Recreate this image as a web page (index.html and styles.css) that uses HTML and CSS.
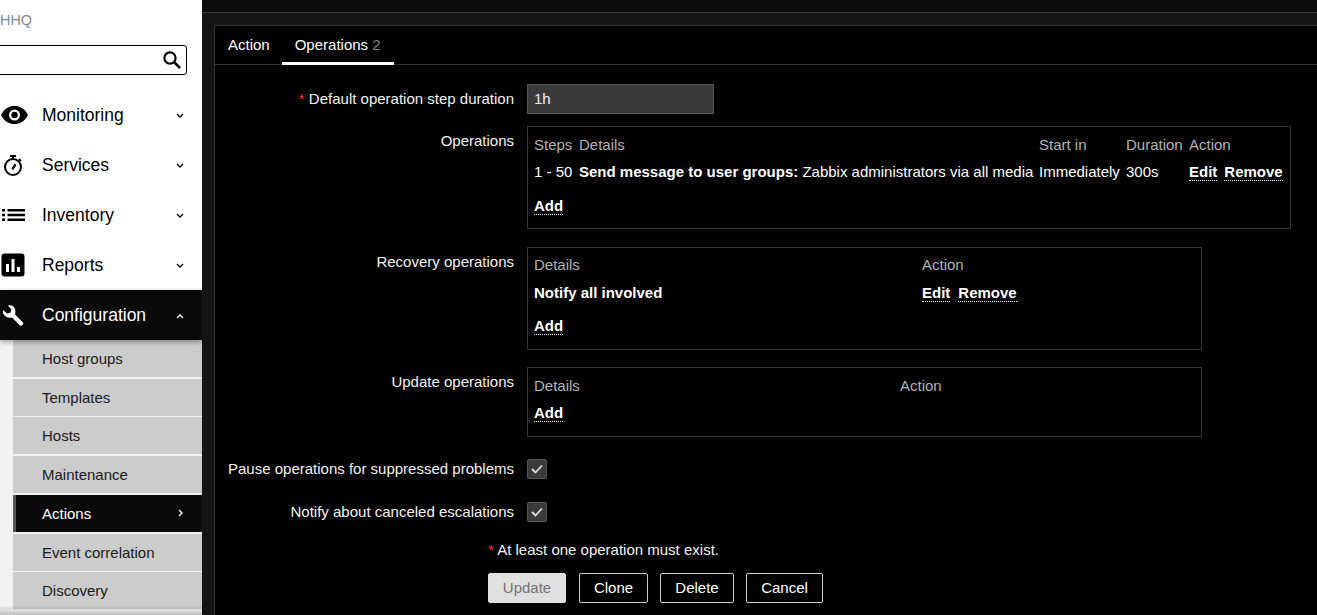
FILE: index.html
```html
<!DOCTYPE html>
<html lang="en">
<head>
<meta charset="utf-8">
<title>Zabbix action</title>
<link rel="stylesheet" href="styles.css">
</head>
<body>
<div class="page">
  <aside class="sidebar">
    <div class="brand">HHQ</div>
    <div class="search">
      <svg class="search-icon" viewBox="0 0 20 20" width="20" height="20"><circle cx="8" cy="8" r="5.6" fill="none" stroke="#000" stroke-width="2.2"/><path d="M12 12l6 6" stroke="#000" stroke-width="2.6"/></svg>
    </div>
    <nav class="nav">
      <a class="nav-item">
        <span class="nav-icon"><svg viewBox="0 0 28 20" width="28" height="20"><path d="M0 10C3.500 3.500 8 1 13.500 1S23.500 3.500 27 10c-3.500 6.500-8 9-13.500 9S3.500 16.500 0 10z" fill="#000"/><circle cx="13.500" cy="10" r="5.500" fill="#fff"/><circle cx="13.500" cy="10" r="3.200" fill="#000"/></svg></span>
        <span class="nav-label">Monitoring</span>
        <svg class="chev" viewBox="0 0 8 6" width="8" height="6"><path d="M1 1l3 3 3-3" fill="none" stroke="#000" stroke-width="1.300"/></svg>
      </a>
      <a class="nav-item">
        <span class="nav-icon"><svg viewBox="0 0 24 24" width="24" height="24"><circle cx="12" cy="14" r="8" fill="none" stroke="#000" stroke-width="2"/><path d="M9 3h6" stroke="#000" stroke-width="2"/><path d="M12 3v3M18 6l2 2" stroke="#000" stroke-width="1.800"/><path d="M11 15.500l3-4.500 1 1-3 4.500z" fill="#000" stroke="#000"/></svg></span>
        <span class="nav-label">Services</span>
        <svg class="chev" viewBox="0 0 8 6" width="8" height="6"><path d="M1 1l3 3 3-3" fill="none" stroke="#000" stroke-width="1.300"/></svg>
      </a>
      <a class="nav-item">
        <span class="nav-icon"><svg viewBox="0 0 24 14" width="24" height="14"><path d="M1 1h3v2.400H1zM1 5.800h3v2.400H1zM1 10.600h3V13H1zM6.500 1H24v2.400H6.500zM6.500 5.800H24v2.400H6.500zM6.500 10.600H24V13H6.500z" fill="#000"/></svg></span>
        <span class="nav-label">Inventory</span>
        <svg class="chev" viewBox="0 0 8 6" width="8" height="6"><path d="M1 1l3 3 3-3" fill="none" stroke="#000" stroke-width="1.300"/></svg>
      </a>
      <a class="nav-item">
        <span class="nav-icon"><svg viewBox="0 0 24 24" width="24" height="24"><rect width="23" height="23" x="0.500" y="0.500" rx="3" fill="#000"/><path d="M5 11h3v8H5zM10.500 6h3v13h-3zM16 14h3v5h-3z" fill="#fff"/></svg></span>
        <span class="nav-label">Reports</span>
        <svg class="chev" viewBox="0 0 8 6" width="8" height="6"><path d="M1 1l3 3 3-3" fill="none" stroke="#000" stroke-width="1.300"/></svg>
      </a>
      <a class="nav-item nav-item-open">
        <span class="nav-icon nav-icon-wrench"><svg viewBox="0 0 24 24" width="24" height="24"><path d="M15 11.500L22.500 19a2 2 0 0 1-3 3L12 14.500c-3.500 1-7-.5-8.500-3.500-.6-1.300-.8-2.800-.5-4l4 3.500 3.500-.8.800-3.500L8 2.500c1.500-.5 3-.3 4.300.3 3 1.500 3.700 5.200 2.700 8.700z" fill="#fff"/></svg></span>
        <span class="nav-label">Configuration</span>
        <svg class="chev" viewBox="0 0 8 6" width="8" height="6"><path d="M1 5l3-3 3 3" fill="none" stroke="#fff" stroke-width="1.300"/></svg>
      </a>
      <ul class="subnav">
        <li class="subnav-item">Host groups</li>
        <li class="subnav-item">Templates</li>
        <li class="subnav-item">Hosts</li>
        <li class="subnav-item">Maintenance</li>
        <li class="subnav-item subnav-active">Actions
          <svg class="chev-right" viewBox="0 0 6 8" width="6" height="8"><path d="M1 1l3 3-3 3" fill="none" stroke="#fff" stroke-width="1.300"/></svg>
        </li>
        <li class="subnav-item">Event correlation</li>
        <li class="subnav-item">Discovery</li>
      </ul>
    </nav>
  </aside>
  <main class="main">
    <div class="topbar"></div>
    <section class="card">
      <div class="tabs">
        <span class="tab">Action</span>
        <span class="tab tab-active">Operations <span class="tab-count">2</span></span>
      </div>
      <form class="form">
        <div class="row row-input">
          <label class="label"><span class="req">*</span> Default operation step duration</label>
          <input class="text-input" type="text" value="1h">
        </div>
        <div class="row row-ops">
          <div class="label label-box">Operations</div>
          <div class="box box-ops">
            <div class="ops-grid ops-head">
              <span>Steps</span><span>Details</span><span>Start in</span><span>Duration</span><span>Action</span>
            </div>
            <div class="ops-grid ops-body">
              <span>1 - 50</span>
              <span><b>Send message to user groups:</b> Zabbix administrators via all media</span>
              <span>Immediately</span>
              <span>300s</span>
              <span class="links"><a class="link">Edit</a><a class="link">Remove</a></span>
            </div>
            <div class="add-row add-ops"><a class="link">Add</a></div>
          </div>
        </div>
        <div class="row row-recovery">
          <div class="label label-box">Recovery operations</div>
          <div class="box box-wide box-recovery">
            <div class="two-grid recovery-cols ops-head"><span>Details</span><span>Action</span></div>
            <div class="two-grid recovery-cols ops-body">
              <b>Notify all involved</b>
              <span class="links"><a class="link">Edit</a><a class="link">Remove</a></span>
            </div>
            <div class="add-row add-recovery"><a class="link">Add</a></div>
          </div>
        </div>
        <div class="row row-update">
          <div class="label label-box">Update operations</div>
          <div class="box box-wide box-update">
            <div class="two-grid update-cols ops-head ops-head-update"><span>Details</span><span>Action</span></div>
            <div class="add-row add-update"><a class="link">Add</a></div>
          </div>
        </div>
        <div class="row row-check">
          <div class="label">Pause operations for suppressed problems</div>
          <span class="check"><svg viewBox="0 0 14 12" width="14" height="12"><path d="M2 6l3.500 3.500L12 2.500" fill="none" stroke="#ddd" stroke-width="1.800"/></svg></span>
        </div>
        <div class="row row-check row-check-2">
          <div class="label">Notify about canceled escalations</div>
          <span class="check"><svg viewBox="0 0 14 12" width="14" height="12"><path d="M2 6l3.500 3.500L12 2.500" fill="none" stroke="#ddd" stroke-width="1.800"/></svg></span>
        </div>
        <div class="row row-note">
          <div class="note"><span class="req">*</span> At least one operation must exist.</div>
        </div>
        <div class="buttons">
          <button class="btn btn-disabled" type="button">Update</button>
          <button class="btn btn-clone" type="button">Clone</button>
          <button class="btn btn-delete" type="button">Delete</button>
          <button class="btn btn-cancel" type="button">Cancel</button>
        </div>
      </form>
    </section>
  </main>
</div>
</body>
</html>
```
FILE: styles.css
```css
* { box-sizing: border-box; }
html, body { margin: 0; height: 100%; overflow: hidden; }
body { font: 15px/17px "Liberation Sans", Arial, sans-serif; background: #141414; color: #fff; }
.page { display: flex; height: 615px; width: 1317px; overflow: hidden; }

.sidebar { width: 202px; flex: none; background: #fff; color: #000; overflow: hidden; position: relative; }
.brand { height: 45px; padding: 12px 0 0 0; color: #7f8b95; font-size: 14.4px; }
.search { height: 30px; margin: 0 15px 0 -10px; border: 1px solid #000; border-radius: 3px; position: relative; background: #fff; }
.search-icon { position: absolute; right: 4px; top: 4px; }
.nav { margin-top: 15px; }
.nav-item { display: flex; align-items: center; height: 50px; padding-right: 18px; font-size: 17.5px; color: #000; }
.nav-icon { width: 42px; flex: none; display: flex; align-items: center; padding-left: 1px; }
.nav-icon-wrench { padding-left: 0; }
.nav-label { flex: 1; }
.chev { margin-top: 2px; }
.nav-item-open { background: #0a0a0a; color: #fff; position: relative; box-shadow: 0 2px 5px rgba(0,0,0,.35); }
.subnav { list-style: none; margin: 0; padding: 0 0 0 13px; background: #f2f2f2; }
.subnav-item { display: flex; align-items: center; justify-content: space-between; height: 37px; margin-bottom: 1.72px; padding: 0 18px 0 29px; background: #ccc; color: #1a1a1a; }
.subnav-active { background: #0a0a0a; color: #fff; border-left: 3px solid #555; padding-left: 26px; }
.sidebar::after { content: ""; position: absolute; left: 0; right: 0; bottom: 0; height: 10px; background: linear-gradient(rgba(0,0,0,0), rgba(0,0,0,.25)); }

.main { flex: 1; min-width: 0; display: flex; flex-direction: column; background: #141414; }
.topbar { height: 13px; flex: none; background: #0d0d0d; border-bottom: 1px solid #3a3a3a; }
.card { margin: 12px -20px 0 12px; flex: 1; background: #000; border: 1px solid #333; border-right: 0; border-bottom: 0; }

.tabs { display: flex; height: 39px; border-bottom: 1px solid #333; }
.tab { padding: 10px 13px 0; height: 39px; border-bottom: 3px solid transparent; }
.tab-active { border-bottom-color: #fff; margin-left: -1px; }
.tab-count { color: #808080; }

.row { display: grid; grid-template-columns: 299px auto; column-gap: 13px; justify-content: start; align-items: start; }
.label { text-align: right; color: #f2f2f2; }
.label-box { padding-top: 6px; }
.req { color: #e33; }

.row-input { margin-top: 19px; align-items: center; }
.row-input .label { padding-bottom: 2px; }
.text-input { width: 187px; height: 30px; padding: 0 6px 2px; background: #3a3a3a; border: 1px solid #555; color: #f2f2f2; font: inherit; }

.box { border: 1px solid #333; padding: 0 6px; }
.box-ops { width: 764px; height: 103px; }
.box-wide { width: 675px; }
.box-recovery { height: 103px; }
.box-update { height: 70px; }
.row-ops { margin-top: 12px; }
.row-recovery { margin-top: 18px; }
.row-update { margin-top: 17px; }

.ops-grid { display: grid; grid-template-columns: 45px 460px 87px 63px auto; }
.two-grid { display: grid; }
.recovery-cols { grid-template-columns: 388px auto; }
.update-cols { grid-template-columns: 366px auto; }
.ops-head { padding-top: 9px; color: #b3b3b3; }
.box-recovery .ops-head { padding-top: 8px; }
.ops-body { margin-top: 10px; }
.box-recovery .ops-body { margin-top: 11px; }
.add-ops { margin-top: 16px; }
.add-recovery { margin-top: 15px; }
.add-update { margin-top: 10px; }
.links { display: flex; gap: 8px; margin-top: 1px; }
.box-ops .links { gap: 7px; }
.link { font-weight: 700; color: #fff; border-bottom: 1px dotted #fff; display: inline-block; line-height: 16px; }

.row-check { margin-top: 22px; align-items: center; }
.row-check .label { padding-bottom: 2px; }
.row-check-2 { margin-top: 23px; }
.check { width: 20px; height: 20px; background: #3a3a3a; border: 1px solid #555; border-radius: 2px; display: flex; align-items: center; justify-content: center; }
.row-note { margin-top: 19px; grid-template-columns: auto; padding-left: 273px; }
.note { color: #f2f2f2; }
.buttons { display: flex; margin: 15px 0 0 273px; }
.btn { height: 30px; padding: 0 0 2px; font: inherit; background: #000; color: #fff; border: 1px solid #ccc; border-radius: 2px; }
.btn-disabled { width: 78px; background: #e0e0e0; border-color: #e0e0e0; color: #737373; }
.btn-clone { width: 69px; margin-left: 13px; }
.btn-delete { width: 74px; margin-left: 12px; }
.btn-cancel { width: 77px; margin-left: 12px; }
```
